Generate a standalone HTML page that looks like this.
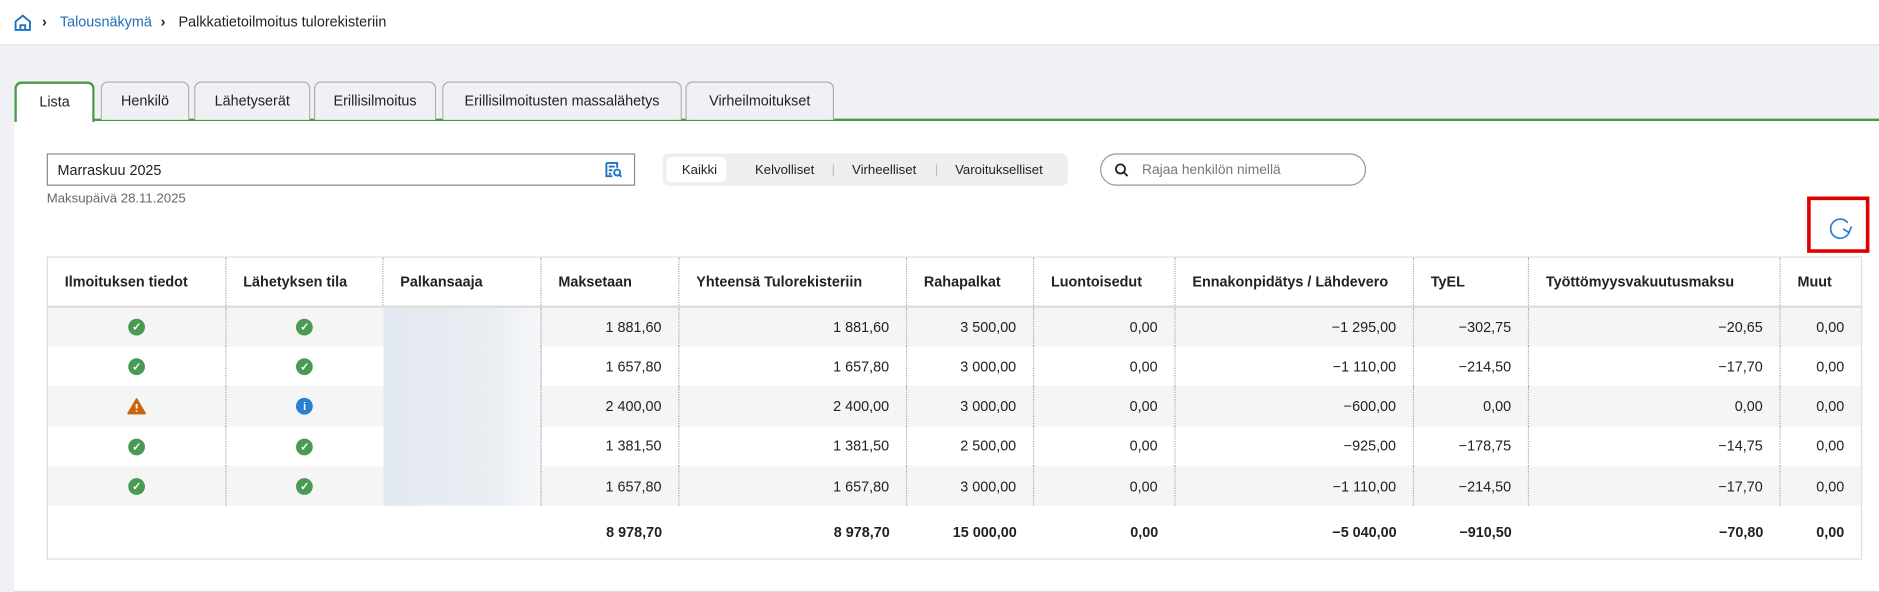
<!DOCTYPE html>
<html><head><meta charset="utf-8"><style>
*{box-sizing:border-box;margin:0;padding:0}
body{width:1879px;height:592px;overflow:hidden;background:#f0f1f4;font-family:"Liberation Sans",sans-serif;color:#222;font-size:12px;position:relative}
#w{position:absolute;left:0;top:0;width:1568px;height:494px;transform:scale(1.19834);transform-origin:0 0}
.top{position:absolute;left:0;top:0;width:1568px;height:38px;background:#fff;border-bottom:1px solid #e2e3e6}
.bc{position:absolute;top:11px;font-size:12px}
.panel{position:absolute;left:12px;top:100px;right:0;height:394px;background:#fff;border-bottom:1px solid #ddd}
.gl{position:absolute;left:12px;top:99px;right:0;height:2px;background:#4a9a4a}
.tab{position:absolute;top:68px;height:32px;background:#f0f1f4;border:1px solid #aaa;border-bottom:none;border-radius:6px 6px 0 0;font-size:12px;text-align:center;line-height:30px;color:#222}
.tab.a{background:#fff;border:2px solid #4a9a4a;border-bottom:none;height:34px;z-index:2}
.inp{position:absolute;left:39px;top:128px;width:491px;height:27px;border:1px solid #888;font-size:12px;padding:6px 8px}
.seg{position:absolute;left:553px;top:128px;width:338px;height:27px;background:#eeeeef;border-radius:5px}
.seg span{position:absolute;top:8px;font-size:11px}
.srch{position:absolute;left:918px;top:128px;width:222px;height:27px;border:1px solid #999;border-radius:14px}
table{position:absolute;left:39px;top:214px;width:1515px;border-collapse:collapse;border:1px solid #ddd;font-size:12px;white-space:nowrap}
th{height:41px;text-align:left;font-weight:700;padding:0 14px;border-bottom:2px solid #ddd;border-left:1px dotted #aaa}
td{height:33.4px;padding:0 14px;text-align:right;border-left:1px dotted #aaa}
th:first-child,td:first-child{border-left:none}
tr.g td{background:#f5f5f5}
tr.t td{height:44px;font-weight:700;border-left:none}
td.c{text-align:center}
.ok,.inf{display:inline-block;width:14px;height:14px;border-radius:50%;background:#4a9a52;color:#fff;font-size:9px;line-height:14px;text-align:center;font-weight:700;vertical-align:middle}
.inf{background:#2a7fd0}
tr td.blur{background:linear-gradient(90deg,#e2e8ef,#eaeef3 70%,#f6f7f9)!important;border-left:none}
</style></head><body><div id="w">
<div class="top">
<svg style="position:absolute;left:11px;top:11px" width="16" height="16" viewBox="0 0 16 16"><path d="M2 7 L8 2 L14 7 V14 H2 Z M6 14 V10 H10 V14" fill="none" stroke="#1a74c0" stroke-width="1.6"/></svg>
<span class="bc" style="left:35px;font-weight:700">›</span>
<span class="bc" style="left:50px;color:#1f6fb2">Talousnäkymä</span>
<span class="bc" style="left:134px;font-weight:700">›</span>
<span class="bc" style="left:149px">Palkkatietoilmoitus tulorekisteriin</span>
</div>
<div class="panel"></div>
<div class="gl"></div>
<div class="tab a" style="left:12px;width:67px">Lista</div>
<div class="tab" style="left:84px;width:74px">Henkilö</div>
<div class="tab" style="left:162px;width:97px">Lähetyserät</div>
<div class="tab" style="left:262px;width:102px">Erillisilmoitus</div>
<div class="tab" style="left:369px;width:200px">Erillisilmoitusten massalähetys</div>
<div class="tab" style="left:572px;width:124px">Virheilmoitukset</div>
<div class="inp">Marraskuu 2025
<svg style="position:absolute;right:10px;top:6px" width="14" height="14" viewBox="0 0 14 14"><path d="M1 1H10V5M1 1V12H6M3 4H8M3 7H6M3 10H5" fill="none" stroke="#1a74c0" stroke-width="1.6"/><circle cx="10" cy="9" r="2.5" fill="none" stroke="#1a74c0" stroke-width="1.6"/><path d="M12 11L13.5 12.5" stroke="#1a74c0" stroke-width="1.6"/></svg></div>
<div style="position:absolute;left:39px;top:160px;font-size:11px;color:#666">Maksupäivä 28.11.2025</div>
<div class="seg"><div style="position:absolute;left:3px;top:3px;width:50px;height:21px;background:#fff;border-radius:4px"></div>
<span style="left:16px">Kaikki</span><span style="left:77px">Kelvolliset</span><span style="left:141px;color:#bbb">|</span><span style="left:158px">Virheelliset</span><span style="left:227px;color:#bbb">|</span><span style="left:244px">Varoitukselliset</span></div>
<div class="srch"><svg style="position:absolute;left:11px;top:7px" width="12" height="12" viewBox="0 0 12 12"><circle cx="5" cy="5" r="3.8" fill="none" stroke="#222" stroke-width="1.5"/><path d="M8 8L11 11" stroke="#222" stroke-width="1.5"/></svg><span style="position:absolute;left:34px;top:7px;color:#777;font-size:11.5px">Rajaa henkilön nimellä</span></div>
<div style="position:absolute;left:1508px;top:164px;width:52px;height:47px;border:3px solid #e00000"></div>
<svg style="position:absolute;left:1525px;top:180px" width="22" height="22" viewBox="0 0 22 22"><path d="M17 6 A8 8 0 1 0 18 14" fill="none" stroke="#2a80d0" stroke-width="1.4"/><path d="M13 11 L18 14 L20 9" fill="none" stroke="#2a80d0" stroke-width="1.4"/></svg>
<table>
<tr><th style="width:149px">Ilmoituksen tiedot</th><th style="width:131px">Lähetyksen tila</th><th style="width:132px">Palkansaaja</th><th style="width:115px">Maksetaan</th><th style="width:190px">Yhteensä Tulorekisteriin</th><th style="width:106px">Rahapalkat</th><th style="width:118px">Luontoisedut</th><th style="width:199px">Ennakonpidätys / Lähdevero</th><th style="width:96px">TyEL</th><th style="width:210px">Työttömyysvakuutusmaksu</th><th>Muut</th></tr>
<tr class="g"><td class="c"><span class="ok">✓</span></td><td class="c"><span class="ok">✓</span></td><td class="blur"></td><td>1 881,60</td><td>1 881,60</td><td>3 500,00</td><td>0,00</td><td>−1 295,00</td><td>−302,75</td><td>−20,65</td><td>0,00</td></tr>
<tr><td class="c"><span class="ok">✓</span></td><td class="c"><span class="ok">✓</span></td><td class="blur"></td><td>1 657,80</td><td>1 657,80</td><td>3 000,00</td><td>0,00</td><td>−1 110,00</td><td>−214,50</td><td>−17,70</td><td>0,00</td></tr>
<tr class="g"><td class="c"><svg width="16" height="14" viewBox="0 0 16 14" style="vertical-align:middle"><path d="M8 1L15 13H1Z" fill="#c8640a" stroke="#c8640a" stroke-linejoin="round" stroke-width="1.5"/><path d="M8 5V9M8 10.5V11.5" stroke="#fff" stroke-width="1.6"/></svg></td><td class="c"><span class="inf">i</span></td><td class="blur"></td><td>2 400,00</td><td>2 400,00</td><td>3 000,00</td><td>0,00</td><td>−600,00</td><td>0,00</td><td>0,00</td><td>0,00</td></tr>
<tr><td class="c"><span class="ok">✓</span></td><td class="c"><span class="ok">✓</span></td><td class="blur"></td><td>1 381,50</td><td>1 381,50</td><td>2 500,00</td><td>0,00</td><td>−925,00</td><td>−178,75</td><td>−14,75</td><td>0,00</td></tr>
<tr class="g"><td class="c"><span class="ok">✓</span></td><td class="c"><span class="ok">✓</span></td><td class="blur"></td><td>1 657,80</td><td>1 657,80</td><td>3 000,00</td><td>0,00</td><td>−1 110,00</td><td>−214,50</td><td>−17,70</td><td>0,00</td></tr>
<tr class="t"><td></td><td></td><td></td><td>8 978,70</td><td>8 978,70</td><td>15 000,00</td><td>0,00</td><td>−5 040,00</td><td>−910,50</td><td>−70,80</td><td>0,00</td></tr>
</table>
</div></body></html>
